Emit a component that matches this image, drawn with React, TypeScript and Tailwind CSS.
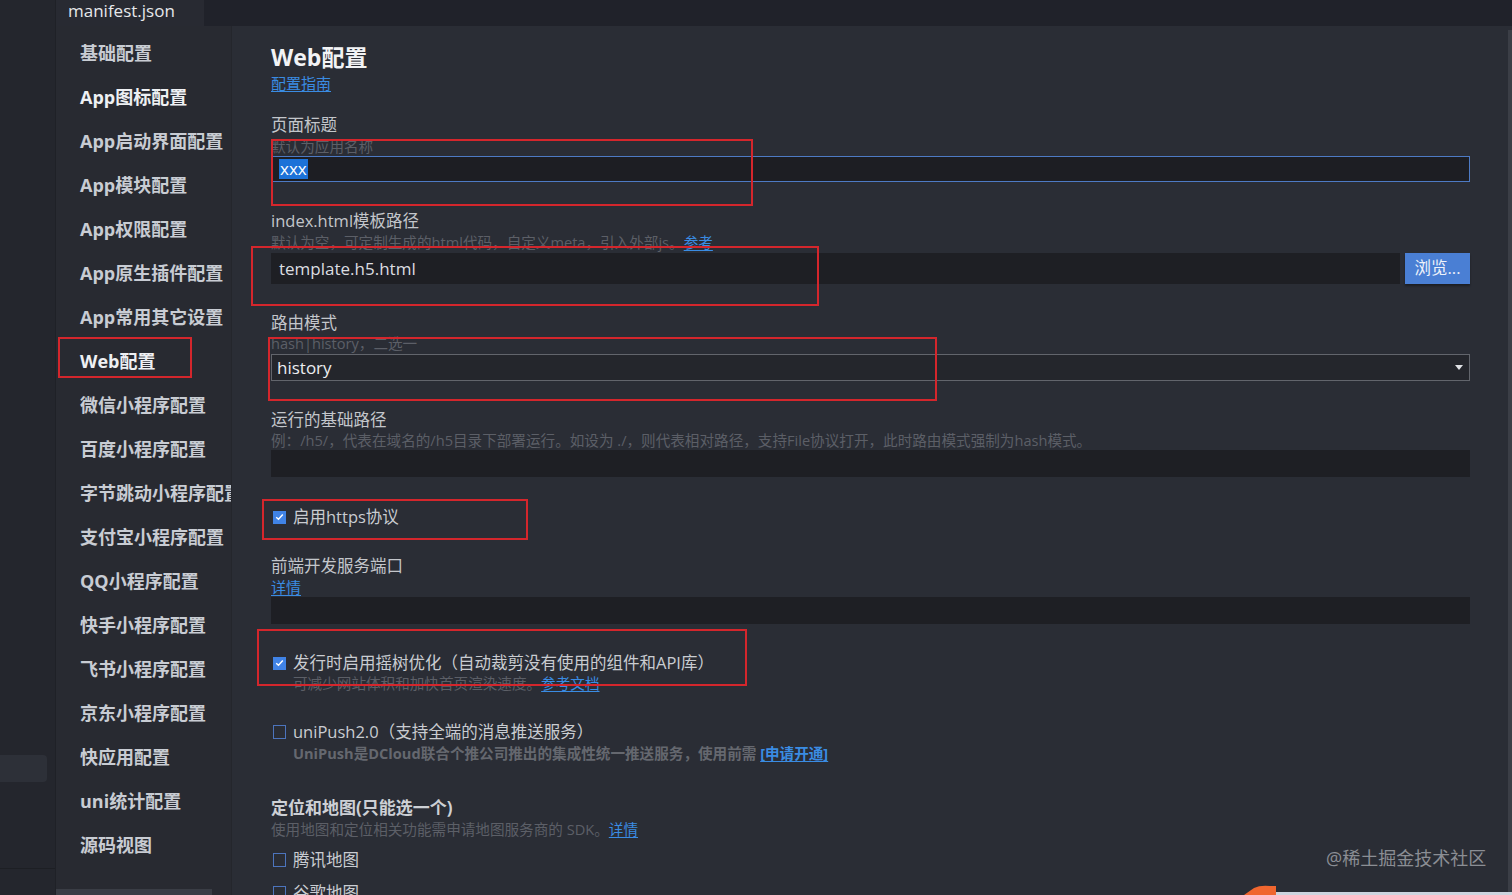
import React from "react";

const navItems = [
  "基础配置",
  "App图标配置",
  "App启动界面配置",
  "App模块配置",
  "App权限配置",
  "App原生插件配置",
  "App常用其它设置",
  "Web配置",
  "微信小程序配置",
  "百度小程序配置",
  "字节跳动小程序配置",
  "支付宝小程序配置",
  "QQ小程序配置",
  "快手小程序配置",
  "飞书小程序配置",
  "京东小程序配置",
  "快应用配置",
  "uni统计配置",
  "源码视图",
];

const bright = ["App图标配置", "Web配置"];

function Label({ children, className = "" }: { children: React.ReactNode; className?: string }) {
  return <div className={`h-[22px] leading-[22px] text-[16.5px] text-[#c3c6cb] ${className}`}>{children}</div>;
}

function Hint({ children, className = "" }: { children: React.ReactNode; className?: string }) {
  return (
    <div className={`h-[19px] leading-[19px] text-[14.6px] text-[#5c5f67] whitespace-nowrap ${className}`}>
      {children}
    </div>
  );
}

function Link({ children }: { children: React.ReactNode }) {
  return <span className="text-[#3a8ce3] underline underline-offset-2">{children}</span>;
}

function Check({ checked }: { checked?: boolean }) {
  return checked ? (
    <span className="w-[13px] h-[13px] bg-[#4083e6] flex items-center justify-center shrink-0">
      <svg width="9" height="8" viewBox="0 0 9 8">
        <path d="M1.2 4.2 L3.5 6.3 L7.8 1.5" stroke="#fff" strokeWidth="1.4" fill="none" />
      </svg>
    </span>
  ) : (
    <span className="w-[13px] h-[14px] border-[1.5px] border-[#4c74bd] shrink-0" />
  );
}

function CheckRow({ checked, children, className = "" }: { checked?: boolean; children: React.ReactNode; className?: string }) {
  return (
    <div className={`h-[22px] flex items-center pl-[2px] gap-[7px] ${className}`}>
      <Check checked={checked} />
      <span className="text-[16.5px] leading-[22px] text-[#c9ccd1] whitespace-nowrap">{children}</span>
    </div>
  );
}

function Box({ className }: { className: string }) {
  return <div className={`absolute border-2 border-[#d4262c] pointer-events-none ${className}`} />;
}

export default function App() {
  return (
    <div
      className="relative w-[1512px] h-[895px] overflow-hidden bg-[#24262d] flex"
      style={{ fontFamily: "'Open Sans', 'Noto Sans CJK SC', sans-serif" }}
    >
      {/* far left strip */}
      <div className="w-[56px] h-full flex flex-col border-r border-[#1f2127]">
        <div className="h-[755px] shrink-0" />
        <div className="h-[27px] w-[47px] shrink-0 bg-[#2d3038] rounded-r-[4px]" />
        <div className="h-[86px] shrink-0" />
        <div className="h-px shrink-0 bg-[#1d1f24]" />
      </div>

      <div className="flex-1 flex flex-col">
        {/* tab bar */}
        <div className="h-[26px] bg-[#20222a] flex shrink-0">
          <div className="w-[148px] bg-[#282a32] pl-[12px] text-[17px] leading-[22px] text-[#e6e8eb]">manifest.json</div>
        </div>

        <div className="flex flex-1 min-h-0">
          {/* nav */}
          <nav className="w-[176px] bg-[#282a31] border-r border-[#24262c] pt-[5px] relative overflow-hidden">
            {navItems.map((item) => (
              <div
                key={item}
                className={`h-[44px] flex items-center pl-[24px] whitespace-nowrap overflow-hidden text-[18px] font-bold ${
                  bright.includes(item) ? "text-[#eef0f3]" : "text-[#c8ccd3]"
                }`}
              >
                {item}
              </div>
            ))}
            <div className="absolute left-0 bottom-0 w-[156px] h-[6px] bg-[#3a3d45]" />
          </nav>

          {/* main */}
          <main className="w-[1276px] bg-[#2a2d35] pl-[39px] pr-[38px] pt-[16px] overflow-hidden">
            <div className="h-[30px] leading-[30px] text-[23px] font-bold text-[#f2f3f5]">Web配置</div>
            <div className="mt-[1px] h-[20px] leading-[20px] text-[15px]">
              <Link>配置指南</Link>
            </div>

            <Label className="mt-[21px]">页面标题</Label>
            <Hint className="mt-[1px]">默认为应用名称</Hint>
            <div className="h-[26px] border border-[#4d7ac4] bg-[#1d1e23] flex items-center pl-[7px]">
              <span className="bg-[#1c72d8] text-white text-[17px] leading-[20px] px-[1px]">xxx</span>
            </div>

            <Label className="mt-[28px]">index.html模板路径</Label>
            <Hint className="mt-[1px] h-[20px]">
              默认为空，可定制生成的html代码，自定义meta，引入外部js。<Link>参考</Link>
            </Hint>
            <div className="h-[31px] flex gap-[5px]">
              <div className="flex-1 bg-[#1e1f24] flex items-center pl-[8px] text-[17px] text-[#dcdde0]">template.h5.html</div>
              <button className="w-[65px] bg-[#4a7fd4] text-[16.5px] text-[#eef2fa] shadow-[0_2px_2px_rgba(0,0,0,0.35)]">浏览...</button>
            </div>

            <Label className="mt-[28px]">路由模式</Label>
            <Hint className="h-[20px]">hash|history，二选一</Hint>
            <div className="h-[27px] border border-[#62656c] bg-[#24262c] flex items-center justify-between pl-[5px] pr-[6px]">
              <span className="text-[17px] text-[#eceef1]">history</span>
              <svg width="8" height="6" viewBox="0 0 8 6">
                <path d="M0 0 H8 L4 5 Z" fill="#e0e2e6" />
              </svg>
            </div>

            <Label className="mt-[28px]">运行的基础路径</Label>
            <Hint>例：/h5/，代表在域名的/h5目录下部署运行。如设为 ./，则代表相对路径，支持File协议打开，此时路由模式强制为hash模式。</Hint>
            <div className="h-[27px] bg-[#1e1f24]" />

            <CheckRow checked className="mt-[29px]">启用https协议</CheckRow>

            <Label className="mt-[27px]">前端开发服务端口</Label>
            <div className="h-[20px] leading-[20px] text-[15px]">
              <Link>详情</Link>
            </div>
            <div className="h-[27px] bg-[#1e1f24]" />

            <CheckRow checked className="mt-[28px]">发行时启用摇树优化（自动裁剪没有使用的组件和API库）</CheckRow>
            <Hint className="pl-[22px] h-[20px]">
              可减少网站体积和加快首页渲染速度。<Link>参考文档</Link>
            </Hint>

            <CheckRow className="mt-[27px]">uniPush2.0（支持全端的消息推送服务）</CheckRow>
            <div className="pl-[22px] h-[20px] leading-[20px] text-[14.6px] font-bold text-[#65686f] whitespace-nowrap">
              UniPush是DCloud联合个推公司推出的集成性统一推送服务，使用前需 <Link>[申请开通]</Link>
            </div>

            <div className="mt-[34px] h-[22px] leading-[22px] text-[17px] font-bold text-[#cdd0d5]">定位和地图(只能选一个)</div>
            <Hint className="mt-[1px] h-[20px]">
              使用地图和定位相关功能需申请地图服务商的 SDK。<Link>详情</Link>
            </Hint>
            <CheckRow className="mt-[9px]">腾讯地图</CheckRow>
            <CheckRow className="mt-[11px]">谷歌地图</CheckRow>
          </main>

          {/* scrollbar */}
          <div className="w-[4px] bg-[#2a2d35] pt-[4px]">
            <div className="h-full bg-[#3b3e46]" />
          </div>
        </div>
      </div>

      {/* annotation overlays */}
      <Box className="left-[271px] top-[139px] w-[482px] h-[67px]" />
      <Box className="left-[251px] top-[246px] w-[568px] h-[60px]" />
      <Box className="left-[268px] top-[337px] w-[669px] h-[64px]" />
      <Box className="left-[58px] top-[337px] w-[134px] h-[41px]" />
      <Box className="left-[262px] top-[499px] w-[266px] h-[41px]" />
      <Box className="left-[257px] top-[629px] w-[490px] h-[57px]" />

      <div className="absolute left-[1326px] top-[846px] text-[18px] leading-[24px] text-[#8b8e94] whitespace-nowrap">
        @稀土掘金技术社区
      </div>

      <svg className="absolute left-[1240px] top-[884px]" width="272" height="11" viewBox="0 0 272 11">
        <path d="M4 11 L14 4 Q20 1 30 2 L36 2 L36 11 Z" fill="#f0662f" />
        <rect x="36" y="8" width="236" height="3" fill="#cdd4de" />
      </svg>
    </div>
  );
}
